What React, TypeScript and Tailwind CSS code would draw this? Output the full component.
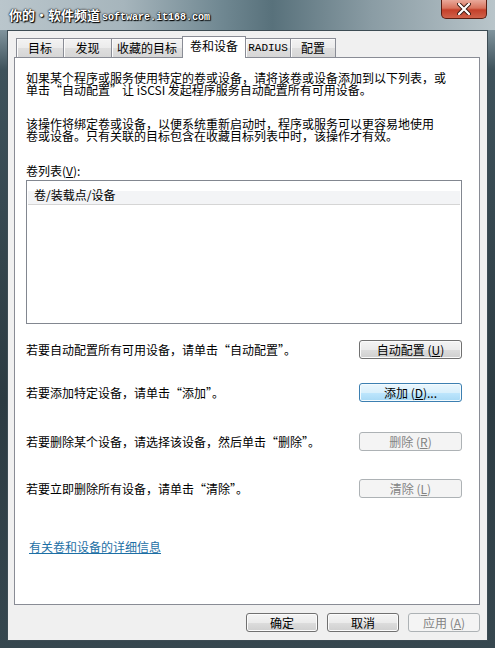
import React from 'react';

const cjk = "[font-family:'Noto_Sans_CJK_SC','Noto_Sans',sans-serif]";

function WinButton({ label, hot, disabled, className = '' }: { label: React.ReactNode; hot?: boolean; disabled?: boolean; className?: string }) {
  let look = 'border-[#707070] bg-[linear-gradient(180deg,#f4f4f4_0%,#ebebeb_50%,#dddddd_51%,#cfcfcf_100%)] text-black shadow-[inset_0_0_0_1px_#fbfbfb]';
  if (hot) look = 'border-[#3c7fb1] bg-[linear-gradient(180deg,#eaf6fd_0%,#d9f0fc_50%,#bee6fd_51%,#a7d9f5_100%)] text-black shadow-[inset_0_0_0_1px_#f4fbfe]';
  if (disabled) look = 'border-[#adb2b5] bg-[#f4f4f4] text-[#838383]';
  return (
    <div className={`h-[19px] border rounded-[3px] flex items-center justify-center text-[12px] leading-[17px] ${look} ${className}`}>
      {label}
    </div>
  );
}

function Tab({ label, active, w, mono }: { label: string; active?: boolean; w: string; mono?: boolean }) {
  if (active) {
    return (
      <div className={`${w} h-[22px] -mb-px -ml-px relative z-10 bg-white border border-b-0 border-[#898c95] flex items-center justify-center pb-[3px] text-[12px]`}>
        {label}
      </div>
    );
  }
  return (
    <div className={`${w} h-[19px] -ml-px first:ml-0 bg-[linear-gradient(180deg,#f3f3f3_0%,#ebebeb_50%,#dedede_51%,#d6d6d6_100%)] border border-b-0 border-[#898c95] shadow-[inset_1px_1px_0_#fcfcfc] flex items-center justify-center ${mono ? "[font-family:'Liberation_Mono',monospace] text-[11px]" : 'text-[12px]'}`}>
      {label}
    </div>
  );
}

export default function App() {
  return (
    <div className={`w-[495px] h-[648px] overflow-hidden bg-[linear-gradient(180deg,#a8b7be_0px,#8397a0_28px,#3e525b_70px,#2c3b42_400px,#36474f_100%)] ${cjk}`}>
      {/* title bar */}
      <div className="h-[30px] flex justify-between items-start bg-[linear-gradient(90deg,#bac6cc_0%,#a6b5bc_25%,#6f8791_45%,#58717b_55%,#8a9ca4_75%,#b9c5ca_100%)]">
        <div className="pl-[9px] pt-[6px] flex items-baseline text-white [text-shadow:0_0_2px_#000,0_0_1px_#000,1px_1px_1px_#000]">
          <span className="text-[13px] font-bold leading-[18px]">你的·软件频道</span>
          <span className="[font-family:'Liberation_Mono',monospace] text-[10px] font-bold ml-[2px]">software.it168.com</span>
        </div>
        <div className="mr-[8px] w-[46px] h-[19px] rounded-b-[5px] border border-t-0 border-[#5a1e12] bg-[linear-gradient(180deg,#e9a99a_0%,#d8735d_45%,#c4402a_55%,#d0624a_100%)] flex items-center justify-center">
          <svg width="14" height="12" viewBox="0 0 14 12">
            <path d="M2 1 L12 11 M12 1 L2 11" stroke="#3a1a12" strokeWidth="4" strokeLinecap="round" />
            <path d="M2 1 L12 11 M12 1 L2 11" stroke="#ffffff" strokeWidth="2.2" strokeLinecap="round" />
          </svg>
        </div>
      </div>

      {/* client area */}
      <div className="ml-[7px] w-[481px] h-[611px] border border-[#3d4c54] bg-[#f0f0f0] text-black">
        <div className="mt-[5px] pl-[8px] flex items-end h-[21px]">
          <Tab label="目标" w="w-[48px]" />
          <Tab label="发现" w="w-[49px]" />
          <Tab label="收藏的目标" w="w-[72px]" />
          <Tab label="卷和设备" w="w-[64px]" active />
          <Tab label="RADIUS" w="w-[46px]" mono />
          <Tab label="配置" w="w-[46px]" />
        </div>

        <div className="ml-[6px] w-[466px] h-[548px] bg-white border border-[#898c95] pl-[11px] pr-[17px] pt-[14px] text-[12px] leading-[12px] whitespace-nowrap">
          <p>
            如果某个程序或服务使用特定的卷或设备，请将该卷或设备添加到以下列表，或
            <br />
            单击“自动配置”让 iSCSI 发起程序服务自动配置所有可用设备。
          </p>
          <p className="mt-[22px]">
            该操作将绑定卷或设备，以便系统重新启动时，程序或服务可以更容易地使用
            <br />
            卷或设备。只有关联的目标包含在收藏目标列表中时，该操作才有效。
          </p>
          <p className="mt-[23px]">
            卷列表(<span className="underline">V</span>):
          </p>

          <div className="mt-[3px] h-[144px] border border-[#828790] p-px">
            <div className="h-[23px] pt-[6px] pl-[6px] border-b border-[#d5d5d5] bg-[linear-gradient(180deg,#ffffff_0%,#ffffff_40%,#f3f4f6_42%,#f3f4f6_100%)] leading-[14px]">
              卷/装载点/设备
            </div>
          </div>

          <div className="mt-[16px] flex items-center justify-between">
            <span>若要自动配置所有可用设备，请单击“自动配置”。</span>
            <WinButton className="w-[103px]" label={<>自动配置 (<span className="underline">U</span>)</>} />
          </div>
          <div className="mt-[24px] flex items-center justify-between">
            <span>若要添加特定设备，请单击“添加”。</span>
            <WinButton className="w-[103px]" hot label={<>添加 (<span className="underline">D</span>)...</>} />
          </div>
          <div className="mt-[30px] flex items-center justify-between">
            <span>若要删除某个设备，请选择该设备，然后单击“删除”。</span>
            <WinButton className="w-[103px]" disabled label={<>删除 (<span className="underline">R</span>)</>} />
          </div>
          <div className="mt-[28px] flex items-center justify-between">
            <span>若要立即删除所有设备，请单击“清除”。</span>
            <WinButton className="w-[103px]" disabled label={<>清除 (<span className="underline">L</span>)</>} />
          </div>

          <p className="mt-[43px] ml-[3px] text-[#1d6fa5] underline">有关卷和设备的详细信息</p>
        </div>

        <div className="mt-[8px] w-[472px] flex justify-end gap-[9px]">
          <WinButton className="w-[72px]" label="确定" />
          <WinButton className="w-[72px]" label="取消" />
          <WinButton className="w-[72px]" disabled label={<>应用 (<span className="underline">A</span>)</>} />
        </div>
      </div>
    </div>
  );
}
